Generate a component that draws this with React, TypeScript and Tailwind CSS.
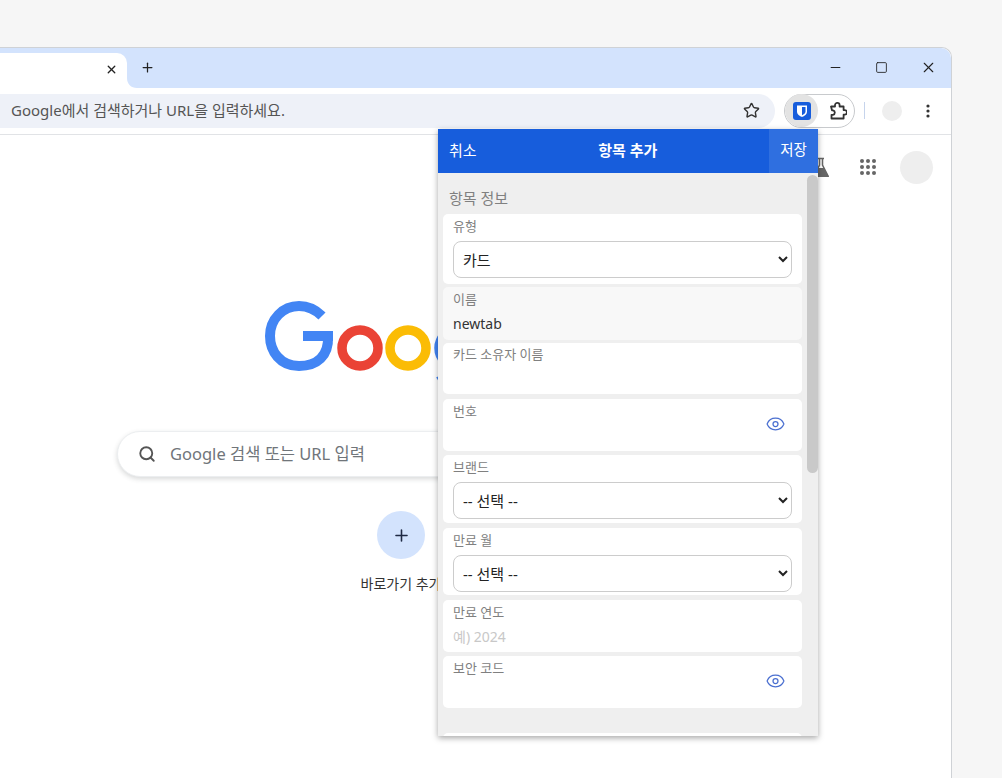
import React from "react";
import { Eye, Minus, Plus, Search, Square, Star, X } from "lucide-react";

const font = { fontFamily: '"Noto Sans", "Noto Sans CJK KR", sans-serif' };

function Field({ label, value, muted, eye, tint, h, select, gap, top = "pt-[4px]" }: { label: string; value?: string; muted?: boolean; eye?: boolean; tint?: boolean; h: string; select?: boolean; gap: string; top?: string }) {
  return (
    <div className={`relative flex flex-col rounded-[5px] px-[10px] ${tint ? "bg-[#f8f8f8]" : "bg-white"} ${h} ${gap}`}>
      <div className={`text-[13px] leading-[16px] text-[#808080] ${top}`}>{label}</div>
      {select ? (
        <select defaultValue={value} className="mt-[7px] h-[37px] w-full rounded-[8px] border border-[#ccc] bg-white pl-[5px] text-[15px] text-[#222]" style={font}>
          <option>{value}</option>
        </select>
      ) : (
        <div className={`mt-[7px] text-[14px] leading-[20px] ${muted ? "text-[#c8c8c8]" : "text-[#333]"}`}>{value}</div>
      )}
      {eye && <Eye className="absolute right-[16px] top-[15px] h-[20px] w-[21px] text-[#4a6fd0]" strokeWidth={1.5} />}
    </div>
  );
}

function GoogleLogo() {
  return (
    <svg width="272" height="92" viewBox="0 0 272 92" className="block">
      <path d="M 68 35 H 38 M 63 35 C 64 55 52 65 34 65 C 15 65 5 50 5 35 C 5 18 18 5 34 5 C 44 5 51 9 57 15" fill="none" stroke="#4285f4" strokeWidth="10" />
      <circle cx="95" cy="47" r="18" fill="none" stroke="#ea4335" strokeWidth="9.5" />
      <circle cx="143" cy="47" r="18" fill="none" stroke="#fbbc05" strokeWidth="9.5" />
      <circle cx="192" cy="47" r="18" fill="none" stroke="#4285f4" strokeWidth="9.5" />
      <path d="M 172 76 L 174 79" fill="none" stroke="#4285f4" strokeWidth="2" />
    </svg>
  );
}

export default function App() {
  return (
    <div className="h-[778px] w-[1002px] overflow-hidden bg-[#f6f6f6] pt-[47px]" style={font}>
      <div className="relative h-[731px] w-[952px] rounded-tr-[10px] border-r border-t border-[#cfd2d6] bg-white">
        <div className="flex h-[40px] items-stretch rounded-tr-[10px] bg-[#d3e3fd]">
          <div className="relative mt-[5px] flex h-[35px] w-[127px] items-center justify-end rounded-tr-[10px] bg-white pb-[2px] pr-[9px]">
            <X className="h-[13px] w-[13px] text-[#222]" strokeWidth={2.5} />
            <svg width="10" height="10" viewBox="0 0 10 10" className="absolute bottom-0 left-[127px]">
              <path d="M0 0 C0 6 4 10 10 10 H0z" fill="#fff" />
            </svg>
          </div>
          <div className="flex w-[41px] items-center justify-center pb-[2px]">
            <Plus className="h-[15px] w-[15px] text-[#222]" strokeWidth={2} />
          </div>
          <div className="flex-1" />
          <div className="flex items-center gap-[32px] pb-[2px] pr-[14px]">
            <Minus className="h-[15px] w-[15px] text-[#222]" strokeWidth={1.6} />
            <Square className="h-[13px] w-[13px] text-[#222]" strokeWidth={1.6} />
            <X className="h-[17px] w-[17px] text-[#222]" strokeWidth={1.6} />
          </div>
        </div>

        <div className="flex h-[47px] items-center border-b border-[#e1e3e6] bg-white pb-[1px]">
          <div className="flex h-[34px] w-[775px] items-center justify-between rounded-r-full bg-[#eef1f8] pl-[11px] pr-[15px]">
            <span className="text-[15px] text-[#555]">Google에서 검색하거나 URL을 입력하세요.</span>
            <Star className="h-[17px] w-[17px] text-[#333]" strokeWidth={2} />
          </div>
          <div className="ml-[9px] flex h-[34px] w-[71px] items-center rounded-full border border-[#c8cacd]">
            <div className="flex h-[33px] w-[33px] items-center justify-center rounded-full bg-[#e3e3e3]">
              <svg width="18" height="18" viewBox="0 0 18 18">
                <rect width="18" height="18" rx="3" fill="#175ddc" />
                <path d="M4 3.5h10v6c0 3-2.5 4.5-5 5.5-2.5-1-5-2.500-5-5.500z" fill="#fff" />
                <path d="M9 5h3.500v4.500c0 1.800-1.700 2.900-3.500 3.700z" fill="#175ddc" />
              </svg>
            </div>
            <svg width="18" height="18" viewBox="0 0 18 18" className="ml-[11px]" fill="none" stroke="#333" strokeWidth="1.8" strokeLinejoin="round">
              <path d="M2 4.500h4V3.200a2.300 2.300 0 0 1 4.600 0v1.300h4v3.600h1a2.300 2.300 0 0 1 0 4.600h-1v3.800H2.500v-3.700h1.500a2.300 2.300 0 0 0 0-4.500H3z" />
            </svg>
          </div>
          <div className="ml-[9px] h-[17px] w-px bg-[#c6d4ec]" />
          <div className="ml-[17px] h-[20px] w-[20px] rounded-full bg-[#eeeeee]" />
          <svg width="4" height="14" viewBox="0 0 4 14" className="ml-[24px]" fill="#333">
            <circle cx="2" cy="2" r="1.600" />
            <circle cx="2" cy="7" r="1.600" />
            <circle cx="2" cy="12" r="1.600" />
          </svg>
        </div>

        <div className="flex h-[49px] items-center justify-end pr-[18px] pt-[15px]">
          <svg width="16" height="20" viewBox="0 0 16 20">
            <path d="M5 1.500h6M6.500 1.500V8L1 19h14L9.500 8V1.500" fill="none" stroke="#666" strokeWidth="1.5" />
            <path d="M5 11h6l5 9H0z" fill="#666" />
          </svg>
          <svg width="16" height="16" viewBox="0 0 16 16" fill="#666" className="ml-[31px]">
            {[2, 8, 14].map((y) =>
              [2, 8, 14].map((x) => <circle key={`${x}-${y}`} cx={x} cy={y} r="2" />)
            )}
          </svg>
          <div className="ml-[24px] h-[33px] w-[33px] rounded-full bg-[#eeeeee]" />
        </div>

        <div className="flex w-[802px] flex-col items-center pt-[117px]">
          <GoogleLogo />
          <div className="mt-[38px] flex h-[46px] w-[568px] items-center rounded-full border border-[#eceef0] bg-white pl-[20px] shadow-[0_2px_5px_rgba(60,64,67,0.2)]">
            <Search className="h-[18px] w-[18px] text-[#555]" strokeWidth={2.5} />
            <span className="ml-[14px] text-[16.5px] text-[#70757a]">Google 검색 또는 URL 입력</span>
          </div>
          <div className="mt-[34px] flex h-[48px] w-[48px] items-center justify-center rounded-full bg-[#d3e3fd]">
            <Plus className="h-[19px] w-[19px] text-[#1f2a44]" strokeWidth={2} />
          </div>
          <div className="mt-[17px] text-[14px] leading-[16px] text-[#333]">바로가기 추가</div>
        </div>

        <div className="absolute left-[438px] top-[81px] flex h-[607px] w-[380px] flex-col bg-[#efefef] shadow-[0_2px_6px_rgba(0,0,0,0.35)]">
          <div className="flex h-[44px] items-stretch justify-between bg-[#175ddc] text-white">
            <span className="flex items-center pb-[2px] pl-[11px] text-[15px]">취소</span>
            <span className="flex items-center pb-[2px] pl-[10px] text-[15px] font-bold">항목 추가</span>
            <span className="flex w-[49px] items-center justify-center bg-[#2f6fe0] pb-[2px] text-[14.5px]">저장</span>
          </div>
          <div className="relative flex-1 overflow-hidden pl-[5px] pr-[16px]">
            <div className="pl-[6px] pt-[15px] text-[15px] leading-[20px] text-[#808080]">항목 정보</div>
            <div className="mt-[6px] flex flex-col">
              <Field label="유형" value="카드" select h="h-[70px]" gap="mb-[3px]" />
              <Field label="이름" value="newtab" tint h="h-[53px]" gap="mb-[3px]" />
              <Field label="카드 소유자 이름" top="pt-[3px]" h="h-[51px]" gap="mb-[5px]" />
              <Field label="번호" eye h="h-[52px]" gap="mb-[4px]" />
              <Field label="브랜드" value="-- 선택 --" select h="h-[68px]" gap="mb-[5px]" />
              <Field label="만료 월" value="-- 선택 --" select h="h-[67px]" gap="mb-[5px]" />
              <Field label="만료 연도" value="예) 2024" muted h="h-[52px]" gap="mb-[4px]" />
              <Field label="보안 코드" eye h="h-[52px]" gap="mb-[25px]" />
              <div className="h-[10px] rounded-[5px] bg-white" />
            </div>
            <div className="absolute right-0 top-[2px] h-[298px] w-[11px] rounded-full bg-[#c9c9c9]" />
          </div>
        </div>
      </div>
    </div>
  );
}
